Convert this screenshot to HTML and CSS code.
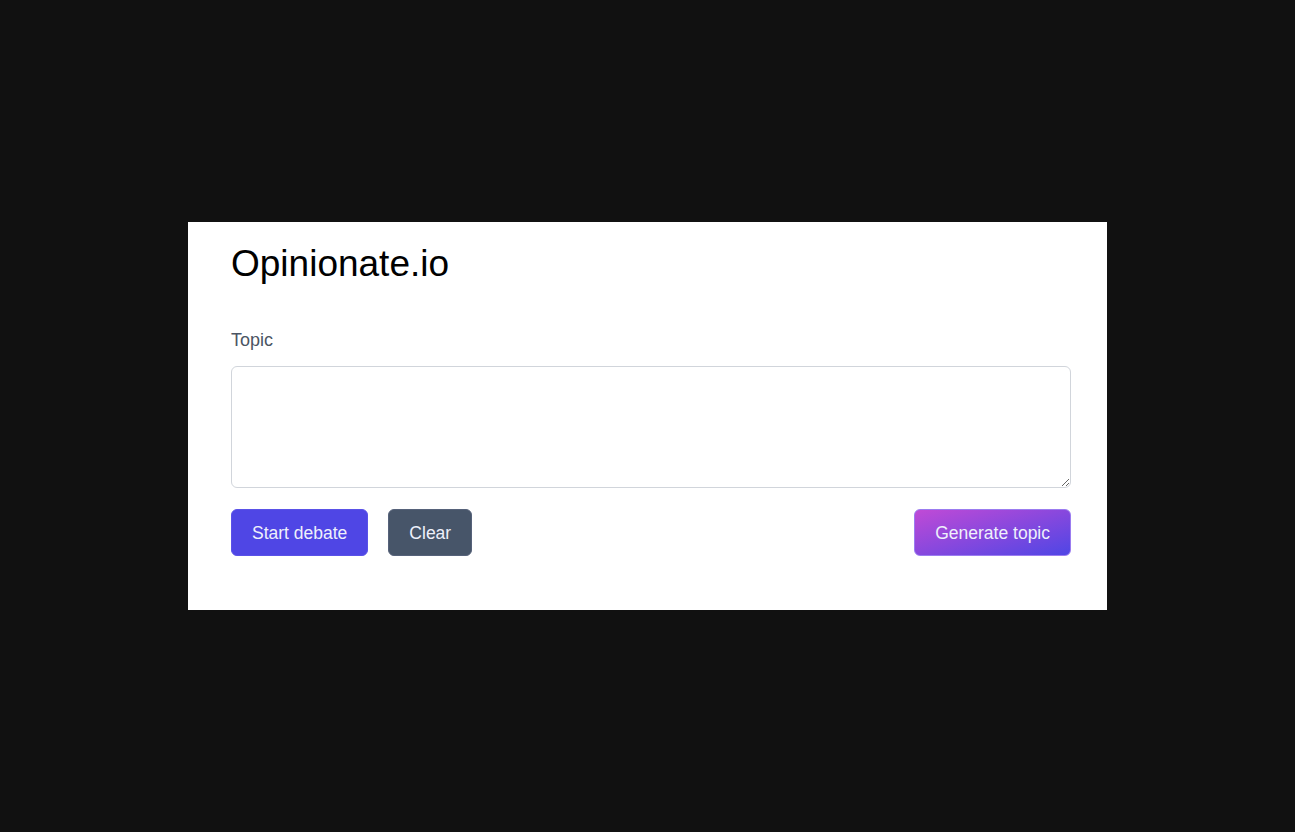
FILE: index.html
```html
<!DOCTYPE html>
<html lang="en">
<head>
<meta charset="utf-8">
<title>Opinionate.io</title>
<link rel="stylesheet" href="styles.css">
</head>
<body>
  <main class="card">
    <h1 class="title">Opinionate.io</h1>
    <label class="label" for="topic">Topic</label>
    <textarea class="topic" id="topic"></textarea>
    <div class="actions">
      <div class="actions-left">
        <button class="btn btn-primary">Start debate</button>
        <button class="btn btn-secondary">Clear</button>
      </div>
      <button class="btn btn-gradient">Generate topic</button>
    </div>
  </main>
</body>
</html>
```

FILE: styles.css
```css
* { box-sizing: border-box; }
html, body { margin: 0; padding: 0; }
body {
  background: #111111;
  min-height: 100vh;
  display: flex;
  align-items: center;
  justify-content: center;
  font-family: "Liberation Sans", Arial, Helvetica, sans-serif;
}
.card {
  width: 919px;
  background: #ffffff;
  padding: 20px 36px 54px 43px;
  display: flex;
  flex-direction: column;
}
.title {
  margin: 0 0 41px 0;
  font-size: 37px;
  line-height: 43px;
  font-weight: 400;
  color: #000000;
}
.label {
  font-size: 18px;
  line-height: 28px;
  color: #4b5563;
  margin-bottom: 12px;
}
.topic {
  display: block;
  width: 840px;
  height: 122px;
  border: 1px solid #d1d5db;
  border-radius: 6px;
  resize: vertical;
  font-family: inherit;
  font-size: 16px;
  padding: 8px 12px;
  margin: 0 0 21px 0;
  background: #fff;
}
.actions {
  width: 840px;
  display: flex;
  justify-content: space-between;
  align-items: center;
}
.actions-left {
  display: flex;
  gap: 20px;
}
.btn {
  font-family: inherit;
  font-size: 17.5px;
  line-height: 23px;
  height: 47px;
  padding: 12px 20px;
  border-radius: 6px;
  border: 1px solid transparent;
  color: #eef0fb;
  cursor: pointer;
}
.btn-primary {
  background: #4f46e5;
  border-color: #5a52e8;
}
.btn-secondary {
  background: #475569;
  border-color: #56627a;
}
.btn-gradient {
  background: linear-gradient(to bottom right, #c04ad6, #4f46e5);
  border-color: #9b7cf0;
}
```
